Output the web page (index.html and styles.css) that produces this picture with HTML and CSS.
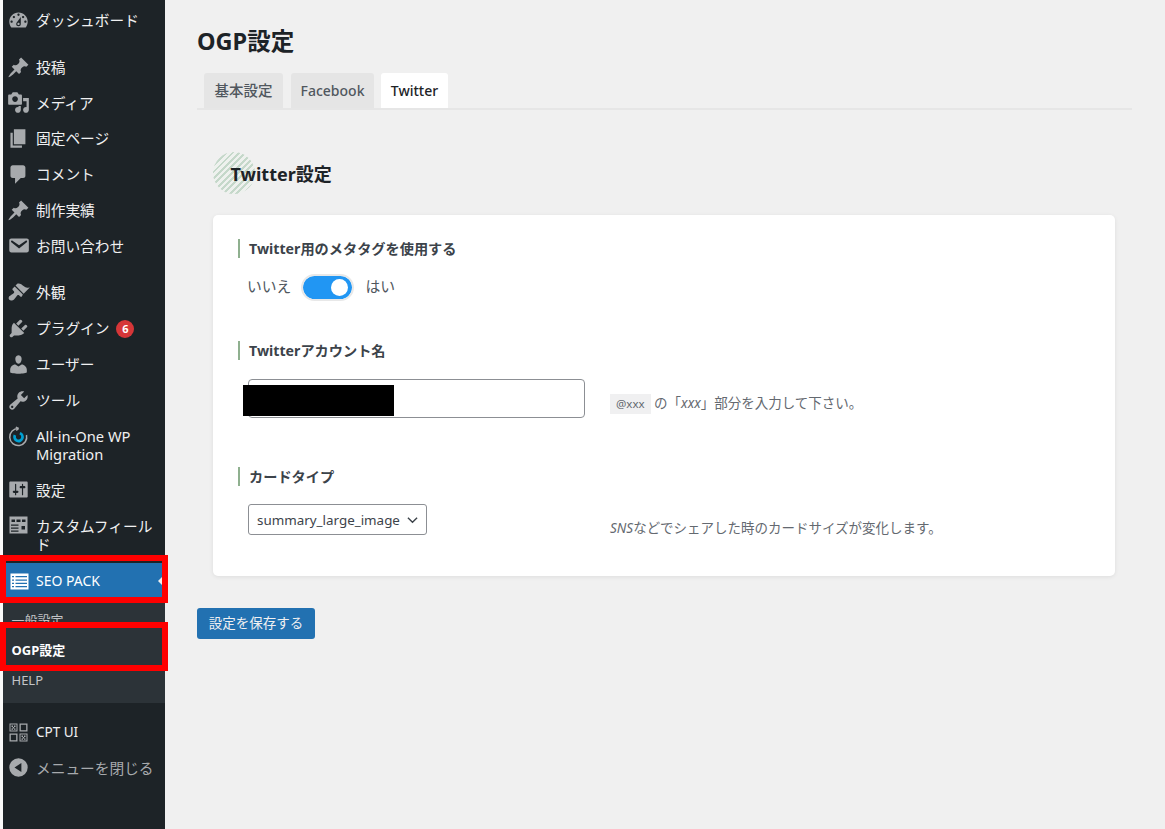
FILE: index.html
```html
<!DOCTYPE html>
<html lang="ja">
<head>
<meta charset="utf-8">
<title>OGP設定</title>
<link rel="stylesheet" href="styles.css">
</head>
<body>
<div class="app">
  <nav class="sidebar">
    <ul class="menu">
      <li class="item"><svg class="ic" viewBox="0 0 20 20"><path d="M3.76 16h12.48c1.1-1.37 1.76-3.11 1.76-5 0-4.42-3.58-8-8-8s-8 3.58-8 8c0 1.89.66 3.63 1.76 5zM10 4c.55 0 1 .45 1 1s-.45 1-1 1-1-.45-1-1 .45-1 1-1zM6 6c.55 0 1 .45 1 1s-.45 1-1 1-1-.45-1-1 .45-1 1-1zm8 0c.55 0 1 .45 1 1s-.45 1-1 1-1-.45-1-1 .45-1 1-1zm-5.37 5.55L12 7v6c0 1.1-.9 2-2 2s-2-.9-2-2c0-.57.24-1.08.63-1.45zM4 10c.55 0 1 .45 1 1s-.45 1-1 1-1-.45-1-1 .45-1 1-1zm12 0c.55 0 1 .45 1 1s-.45 1-1 1-1-.45-1-1 .45-1 1-1zm-5 3c0-.55-.45-1-1-1s-1 .45-1 1 .45 1 1 1 1-.45 1-1z"/></svg><span>ダッシュボード</span></li>
      <li class="sep"></li>
      <li class="item"><svg class="ic" viewBox="0 0 20 20"><path d="M10.44 3.02l1.82-1.82 6.36 6.35-1.83 1.82c-1.05-.68-2.48-.57-3.41.36l-.75.75c-.92.93-1.04 2.35-.35 3.41l-1.83 1.82-2.41-2.41-2.8 2.79c-.42.42-3.38 2.71-3.8 2.29s1.86-3.39 2.28-3.81l2.79-2.79L4.1 9.36l1.83-1.82c1.05.69 2.48.57 3.4-.36l.75-.75c.93-.92 1.05-2.35.36-3.41z"/></svg><span>投稿</span></li>
      <li class="item"><svg class="ic" viewBox="0 0 20 20"><path d="M13 11V4c0-.55-.45-1-1-1h-1.67L9 1H5L3.67 3H2c-.55 0-1 .45-1 1v7c0 .55.45 1 1 1h10c.55 0 1-.45 1-1zM7 4.5c1.38 0 2.5 1.12 2.5 2.5S8.38 9.5 7 9.5 4.5 8.38 4.5 7 5.62 4.5 7 4.5zM14 6h5v10.5c0 1.38-1.12 2.5-2.5 2.5S14 17.88 14 16.5s1.12-2.5 2.5-2.5c.17 0 .34.02.5.05V9h-3V6zm-4 8.05V13h2v3.5c0 1.38-1.12 2.5-2.5 2.5S7 17.88 7 16.5 8.12 14 9.5 14c.17 0 .34.02.5.05z"/></svg><span>メディア</span></li>
      <li class="item"><svg class="ic" viewBox="0 0 20 20"><path d="M6 15V2h10v13H6zm-1 1h8v2H3V5h2v11z"/></svg><span>固定ページ</span></li>
      <li class="item"><svg class="ic" viewBox="0 0 20 20"><path d="M5 2h9c1.1 0 2 .9 2 2v7c0 1.1-.9 2-2 2h-2l-5 5v-5H5c-1.1 0-2-.9-2-2V4c0-1.1.9-2 2-2z"/></svg><span>コメント</span></li>
      <li class="item"><svg class="ic" viewBox="0 0 20 20"><path d="M10.44 3.02l1.82-1.82 6.36 6.35-1.83 1.82c-1.05-.68-2.48-.57-3.41.36l-.75.75c-.92.93-1.04 2.35-.35 3.41l-1.83 1.82-2.41-2.41-2.8 2.79c-.42.42-3.38 2.71-3.8 2.29s1.86-3.39 2.28-3.81l2.79-2.79L4.1 9.36l1.83-1.82c1.05.69 2.48.57 3.4-.36l.75-.75c.93-.92 1.05-2.35.36-3.41z"/></svg><span>制作実績</span></li>
      <li class="item"><svg class="ic" viewBox="0 0 20 20"><path d="M3.87 4h13.25C18.37 4 19 4.59 19 5.79v8.42c0 1.19-.63 1.79-1.88 1.79H3.87c-1.25 0-1.88-.6-1.88-1.79V5.79c0-1.2.63-1.79 1.88-1.79zm6.62 8.6l6.74-5.53c.24-.2.43-.66.13-1.07-.29-.41-.82-.42-1.17-.17l-5.7 3.86L4.8 5.83c-.35-.25-.88-.24-1.17.17-.3.41-.11.87.13 1.07l6.73 5.53z"/></svg><span>お問い合わせ</span></li>
      <li class="sep sep2"></li>
      <li class="item"><svg class="ic" viewBox="0 0 20 20"><path d="M14.48 11.06L7.41 3.99l1.5-1.5c.5-.56 2.3-.47 3.51.32 1.21.8 1.43 1.28 2.91 2.1 1.18.64 2.45 1.26 4.45.85zm-.71.71L6.7 4.7 4.93 6.47c-.39.39-.39 1.02 0 1.41l1.06 1.06c.39.39.39 1.03 0 1.42-.6.6-1.43 1.11-2.21 1.69-.35.26-.7.53-1.01.84C1.43 13.23.9 15.3 2.01 16.4c1.1 1.11 3.17.58 4.51-.77.31-.31.58-.66.84-1.02.57-.78 1.09-1.6 1.69-2.2.39-.39 1.03-.39 1.42 0l1.06 1.06c.39.39 1.02.39 1.41 0z"/></svg><span>外観</span></li>
      <li class="item wide"><svg class="ic" viewBox="0 0 20 20"><path d="M13.11 4.36L9.87 7.6 8 5.73l3.24-3.24c.35-.34 1.05-.2 1.56.32.52.51.66 1.21.31 1.55zm-8 1.77l.91-1.12 9.01 9.01-1.19.84c-.71.71-2.63 1.16-3.82 1.16H6.14L4.9 17.26c-.59.59-1.54.59-2.12 0-.59-.58-.59-1.53 0-2.12l1.24-1.24v-3.88c0-1.13.4-3.19 1.09-3.89zm7.26 3.97l3.24-3.24c.34-.35 1.04-.21 1.55.31.52.51.66 1.21.31 1.55l-3.24 3.25z"/></svg><span>プラグイン</span><b class="badge">6</b></li>
      <li class="item wide"><svg class="ic" viewBox="0 0 20 20"><path d="M10 9.25c-2.27 0-2.73-3.44-2.73-3.44C7 4.02 7.82 2 9.97 2c2.16 0 2.98 2.02 2.71 3.81 0 0-.41 3.44-2.68 3.44zm0 2.57L12.72 10c2.39 0 4.52 2.33 4.52 4.53v2.49s-3.65 1.13-7.24 1.13c-3.65 0-7.24-1.13-7.24-1.13v-2.49c0-2.25 1.94-4.48 4.47-4.48z"/></svg><span>ユーザー</span></li>
      <li class="item wide"><svg class="ic" viewBox="0 0 20 20"><path d="M16.68 9.77c-1.34 1.34-3.3 1.67-4.95.99l-5.41 6.52c-.99.99-2.59.99-3.58 0s-.99-2.59 0-3.57l6.52-5.42c-.68-1.65-.35-3.61.99-4.95 1.28-1.28 3.12-1.62 4.72-1.06l-2.89 2.89 2.82 2.82 2.86-2.87c.53 1.58.18 3.39-1.08 4.65zM3.81 16.21c.4.39 1.04.39 1.43 0 .4-.4.4-1.04 0-1.43-.39-.4-1.03-.4-1.43 0-.39.39-.39 1.03 0 1.43z"/></svg><span>ツール</span></li>
      <li class="item two mig"><svg class="ic" viewBox="-1.5 -1.5 23 23"><path class="ring" d="M10 2 A8.500 8.500 0 1 0 18 8.500"/><path class="ring" d="M10 2 L7.300 .8 M10 2 L7.800 4"/><circle class="swirl" cx="10" cy="10.500" r="4" stroke-dasharray="19 6.100" transform="rotate(-70 10 10.500)"/></svg><span>All-in-One WP<br>Migration</span></li>
      <li class="item"><svg class="ic" viewBox="0 0 20 20"><path d="M18 16V4c0-.55-.45-1-1-1H3c-.55 0-1 .45-1 1v12c0 .55.45 1 1 1h14c.55 0 1-.45 1-1zM8 11h1c.55 0 1 .45 1 1s-.45 1-1 1H8v1.5c0 .28-.22.5-.5.5s-.5-.22-.5-.5V13H6c-.55 0-1-.45-1-1s.45-1 1-1h1V5.500c0-.28.22-.5.5-.5s.5.22.5.5V11zm5-2h-1c-.55 0-1-.45-1-1s.45-1 1-1h1V5.500c0-.28.22-.5.5-.5s.5.22.5.5V7h1c.55 0 1 .45 1 1s-.45 1-1 1h-1v5.500c0 .28-.22.5-.5.5s-.5-.22-.5-.5V9z"/></svg><span>設定</span></li>
      <li class="item two top"><svg class="ic" viewBox="-1.5 -1.5 23 23"><path fill-rule="evenodd" d="M1 1h18v17H1zM3 4h3.500v2.500H3zM8 4h4v2.500H8zM13.500 4H17v2.500h-3.500zM2.500 9h7.500v1.300H2.500zM2.500 12h7.500v1.300H2.500zM2.500 15h7.500v1.300H2.500zM13 10.500h3.500V14H13z"/></svg><span>カスタムフィールド</span></li>
      <li class="item current"><svg class="ic" viewBox="-1.5 -1.5 23 23"><path fill-rule="evenodd" d="M2 2h18v16H2zM3.500 4.500v1.200h2V4.500zm3.500 0v1.200h11.500V4.500zM3.500 8v1.200h2V8zm3.500 0v1.200h11.500V8zM3.500 11.300v1.200h2v-1.200zm3.500 0v1.200h11.500v-1.200zM3.500 14.500v1.200h2v-1.200zm3.500 0v1.200h11.500v-1.200z"/></svg><span>SEO PACK</span><i class="pointer"></i></li>
      <li class="sub">
        <a class="subitem">一般設定</a>
        <a class="subitem active">OGP設定</a>
        <a class="subitem">HELP</a>
      </li>
      <li class="sep"></li>
      <li class="item cpt"><svg class="ic" viewBox="-1.5 -1.5 23 23"><path fill-rule="evenodd" d="M1 1h8v8H1zM2 2v6h6V2zM11 1h8v8h-8zM12.300 2.300v5.400h5.400V2.300zM1 11h8v8H1zM2.300 12.300v5.400h5.400v-5.400zM11 11h8v8h-8zM12 12v6h6v-6z"/><path d="M3 3h1.500v1.500H3zM5.500 3H7v1.500H5.500zM4.200 4.500h1.500V6H4.200zM3 6h1.500v1.300H3zM5.500 6H7v1.300H5.500zM13 13h1.500v1.500H13zM15.500 13H17v1.500h-1.500zM14.200 14.500h1.500V16h-1.500zM13 16h1.500v1.300H13zM15.500 16H17v1.300h-1.500z"/></svg><span>CPT UI</span></li>
      <li class="item muted"><svg class="ic" viewBox="0 0 20 20"><path fill-rule="evenodd" d="M10 2a8 8 0 1 1 0 16 8 8 0 0 1 0-16zM12.500 6 6.500 10l6 4z"/></svg><span>メニューを閉じる</span></li>
    </ul>
  </nav>

  <main class="main">
    <h1 class="title">OGP設定</h1>
    <div class="tabs">
      <a class="tab tab-a">基本設定</a>
      <a class="tab tab-b">Facebook</a>
      <a class="tab tab-c">Twitter</a>
    </div>
    <section class="section">
      <h2 class="heading">Twitter設定</h2>
      <div class="card">
        <div class="field f1">
          <h3 class="label">Twitter用のメタタグを使用する</h3>
          <div class="switchrow">
            <span class="opt">いいえ</span>
            <span class="switch"><i class="knob"></i></span>
            <span class="opt">はい</span>
          </div>
        </div>
        <div class="field f2">
          <h3 class="label">Twitterアカウント名</h3>
          <div class="row">
            <div class="input"><i class="redact"></i></div>
            <p class="hint"><code class="code">@xxx</code> の「<em>xxx</em>」部分を入力して下さい。</p>
          </div>
        </div>
        <div class="field f3">
          <h3 class="label">カードタイプ</h3>
          <div class="row">
            <div class="select">summary_large_image<svg class="chev" viewBox="0 0 12 8"><path d="M1 1.500 6 6.500 11 1.500"/></svg></div>
            <p class="hint hint2"><em>SNS</em>などでシェアした時のカードサイズが変化します。</p>
          </div>
        </div>
      </div>
      <a class="save">設定を保存する</a>
    </section>
  </main>
</div>
<div class="mark mark1"></div>
<div class="mark mark2"></div>
</body>
</html>
```
FILE: styles.css
```css
* { box-sizing: border-box; }
html, body { margin: 0; padding: 0; height: 829px; overflow: hidden; }
body {
  position: relative;
  background: #f0f0f0;
  color: #1d2327;
  font-family: "Noto Sans", "Noto Sans CJK JP", sans-serif;
}
.app { display: flex; height: 829px; }

.sidebar {
  flex: 0 0 165px;
  border-left: 3px solid #fafafa;
  background: #1d2327;
  padding-top: 2.2px;
}
.menu { list-style: none; margin: 0; padding: 0; }
.item {
  position: relative;
  display: flex;
  align-items: center;
  height: 35.750px;
  padding-left: 3.5px;
  color: #f0f0f1;
  font-size: 14.7px;
  line-height: 18.500px;
}
.item.wide { height: 36.200px; }
.item.two { height: 53.400px; }
.item.top { height: 55.400px; }
.item.top span { width: 124px; }
.two .ic { align-self: flex-start; margin-top: 6px; }
.ic { flex: 0 0 23px; width: 23px; height: 23px; margin-right: 6.500px; fill: #a7aaad; }
.ring { fill: none; stroke: #a7aaad; stroke-width: 1.500; }
.swirl { fill: none; stroke: #00a0d2; stroke-width: 2.800; }
.sep { height: 11.400px; }
.sep2 { height: 10.500px; }
.badge {
  display: inline-flex;
  align-items: center;
  justify-content: center;
  width: 18px;
  height: 18px;
  margin: 2px 0 0 7px;
  border-radius: 50%;
  background: #d63638;
  color: #fff;
  font-size: 11px;
  font-weight: 700;
}
.current { background: #2271b1; color: #fff; font-size: 14px; padding-top: 1px; }
.current .ic { fill: #fff; }
.cpt { font-size: 13.500px; }
.pointer {
  position: absolute;
  right: 0;
  top: 11px;
  border: 7px solid transparent;
  border-left: 0;
  border-right: 7px solid #f0f0f0;
}
.sub { background: #2c3338; padding: 6.500px 0 7.500px; }
.subitem {
  display: block;
  height: 30px;
  padding-left: 8.500px;
  color: #c3c4c7;
  font-size: 13px;
  line-height: 30px;
}
.subitem.active { color: #fff; font-weight: 700; }
.muted { color: #a7aaad; }

.main { flex: 1; padding: 24px 33px 0 32px; min-width: 0; }
.title { margin: 0; font-size: 23.500px; line-height: 34px; font-weight: 700; color: #1d2327; }
.tabs {
  display: flex;
  gap: 8px;
  height: 37px;
  margin-top: 15px;
  padding-left: 7px;
  border-bottom: 2px solid #e6e6e6;
}
.tab {
  height: 35px;
  background: #e5e5e5;
  border-radius: 3px 3px 0 0;
  color: #50575e;
  font-size: 14px;
  font-weight: 500;
  line-height: 35px;
  text-align: center;
}
.tab-a { width: 79px; font-size: 14.500px; }
.tab-b { width: 83px; }
.tab-c { width: 67px; margin-left: -1px; background: #fff; color: #1d2327; }

.section { padding-left: 16px; padding-right: 17px; }
.heading {
  position: relative;
  height: 42px;
  margin: 42px 0 0;
  padding-left: 17.500px;
  font-size: 18px;
  font-weight: 700;
  line-height: 44px;
  color: #1d2327;
}
.heading::before {
  content: "";
  position: absolute;
  left: 0;
  top: 0;
  z-index: -1;
  width: 42px;
  height: 42px;
  border-radius: 50%;
  background: repeating-linear-gradient(135deg, #c5d8ca 0 2px, #eef1ee 2px 4.500px);
}
.card {
  margin-top: 21px;
  height: 361px;
  padding: 24px 25px 0;
  background: #fff;
  border-radius: 5px;
  box-shadow: 0 1px 4px rgba(0, 0, 0, .08);
}
.label {
  margin: 0;
  padding-left: 9px;
  border-left: 2px solid #8fb08f;
  color: #3c434a;
  font-size: 14.200px;
  font-weight: 700;
  line-height: 19px;
}
.switchrow {
  display: flex;
  align-items: flex-start;
  gap: 11px;
  margin-top: 16px;
  padding-left: 9px;
  height: 27px;
  color: #50575e;
  font-size: 14.800px;
}
.switchrow .opt:first-child { margin-right: -1px; }
.opt { margin-top: 1px; line-height: 22px; }
.switch {
  display: flex;
  align-items: center;
  justify-content: flex-end;
  width: 53px;
  height: 27px;
  padding-right: 4px;
  background: #2196f3;
  background-clip: padding-box;
  border: 2px solid #e8e8e8;
  border-radius: 14px;
}
.knob { width: 17px; height: 17px; border-radius: 50%; background: #fff; }
.f2 { margin-top: 40px; }
.f3 { margin-top: 49px; }
.row { display: flex; padding-left: 10px; }
.f2 .row { margin-top: 19px; align-items: flex-end; }
.f3 .row { margin-top: 18px; align-items: flex-end; }
.input {
  position: relative;
  width: 337px;
  height: 39px;
  background: #fff;
  border: 1px solid #8c8f94;
  border-radius: 4px;
}
.redact { position: absolute; left: -6px; top: 5px; width: 151px; height: 31px; background: #000; }
.hint { margin: 0 0 4px 25px; color: #646970; font-size: 13.500px; line-height: 22px; }
.hint em { font-style: italic; }
.code {
  display: inline-block;
  padding: 0 6px;
  background: #f0f0f1;
  font-family: "Noto Sans", "Noto Sans CJK JP", sans-serif;
  font-size: 11.500px;
  line-height: 20px;
}
.select {
  display: flex;
  align-items: center;
  justify-content: space-between;
  width: 179px;
  height: 31px;
  padding: 0 8px;
  background: #fff;
  border: 1px solid #8c8f94;
  border-radius: 3px;
  color: #3c434a;
  font-size: 13.400px;
}
.chev { width: 11px; height: 8px; fill: none; stroke: #3c434a; stroke-width: 1.500; }
.hint2 { margin: 0 0 -4px 183px; }
.save {
  display: inline-block;
  margin: 32px 0 0 -16px;
  width: 118px;
  height: 31px;
  background: #2271b1;
  border-radius: 3px;
  color: #f0f0f1;
  font-size: 13.500px;
  line-height: 31px;
  text-align: center;
}

.mark { position: absolute; left: 0; width: 168px; border: 6px solid #f00; }
.mark1 { top: 555px; height: 48px; }
.mark2 { top: 622px; height: 49px; }
```
